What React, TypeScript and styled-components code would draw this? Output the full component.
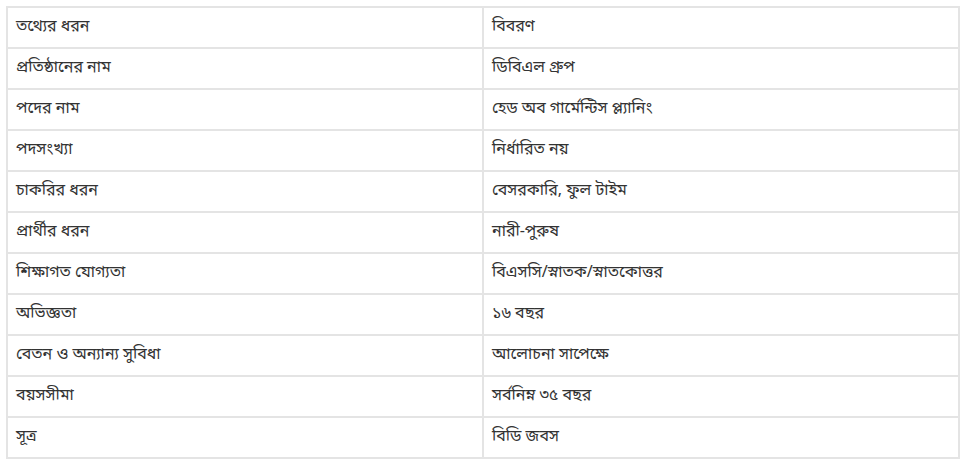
import React from 'react';
import styled, { createGlobalStyle } from 'styled-components';

const GlobalStyle = createGlobalStyle`
  html, body {
    margin: 0;
    padding: 0;
    background: #fff;
  }
`;

const Page = styled.div`
  padding: 6px 8px 0 6px;
`;

const Table = styled.table`
  width: 100%;
  border-collapse: collapse;
  border: 2px solid #e4e4e4;
  table-layout: fixed;
  font-family: "Noto Sans", "Noto Sans Bengali", sans-serif;
  font-size: 16px;
  color: #333;
`;

const Cell = styled.td`
  border: 2px solid #e4e4e4;
  padding: 8px 8px 12px;
  height: 19px;
  line-height: 19px;
  vertical-align: top;
  text-align: left;
`;

const rows: [string, string][] = [
  ['তথ্যের ধরন', 'বিবরণ'],
  ['প্রতিষ্ঠানের নাম', 'ডিবিএল গ্রুপ'],
  ['পদের নাম', 'হেড অব গার্মেন্টিস প্ল্যানিং'],
  ['পদসংখ্যা', 'নির্ধারিত নয়'],
  ['চাকরির ধরন', 'বেসরকারি, ফুল টাইম'],
  ['প্রার্থীর ধরন', 'নারী-পুরুষ'],
  ['শিক্ষাগত যোগ্যতা', 'বিএসসি/স্নাতক/স্নাতকোত্তর'],
  ['অভিজ্ঞতা', '১৬ বছর'],
  ['বেতন ও অন্যান্য সুবিধা', 'আলোচনা সাপেক্ষে'],
  ['বয়সসীমা', 'সর্বনিম্ন ৩৫ বছর'],
  ['সূত্র', 'বিডি জবস'],
];

export default function App() {
  return (
    <>
      <GlobalStyle />
      <Page>
        <Table>
          <tbody>
            {rows.map(([label, value]) => (
              <tr key={label}>
                <Cell>{label}</Cell>
                <Cell>{value}</Cell>
              </tr>
            ))}
          </tbody>
        </Table>
      </Page>
    </>
  );
}
